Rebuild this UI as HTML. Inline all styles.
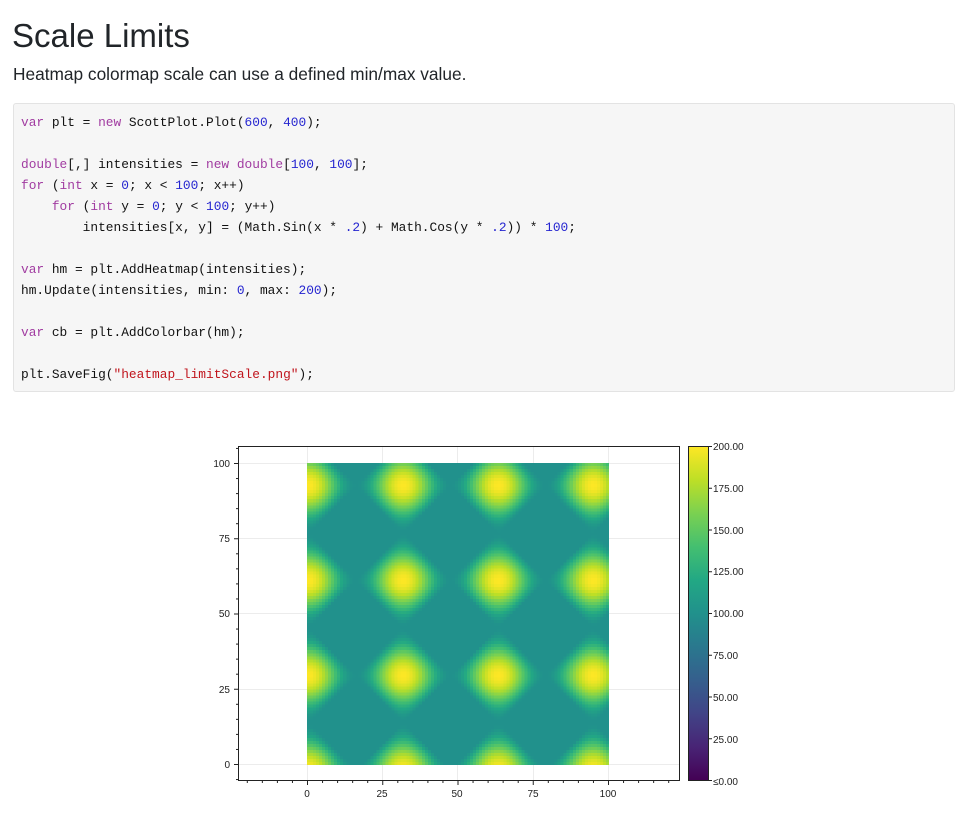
<!DOCTYPE html>
<html><head><meta charset="utf-8"><style>
body{margin:0;background:#fff;font-family:"Liberation Sans",sans-serif;color:#212529;width:968px;height:828px;overflow:hidden;position:relative}
h1{position:absolute;left:12px;top:15px;margin:0;font-size:33px;font-weight:400;line-height:42px}
p.sub{position:absolute;left:13px;top:64px;margin:0;font-size:17.3px}
pre{position:absolute;left:13px;top:103px;width:942px;height:289px;margin:0;background:#f6f6f6;border:1px solid #e3e3e3;border-radius:3px;font-family:"Liberation Mono",monospace;font-size:12.85px;line-height:21px;padding:8px 0 0 7px;box-sizing:border-box;color:#111}
.k{color:#a13ca1}.n{color:#2424d0}.s{color:#c0141c}
</style></head><body>
<h1>Scale Limits</h1>
<p class="sub">Heatmap colormap scale can use a defined min/max value.</p>
<pre><span class="k">var</span> plt = <span class="k">new</span> ScottPlot.Plot(<span class="n">600</span>, <span class="n">400</span>);

<span class="k">double</span>[,] intensities = <span class="k">new</span> <span class="k">double</span>[<span class="n">100</span>, <span class="n">100</span>];
<span class="k">for</span> (<span class="k">int</span> x = <span class="n">0</span>; x &lt; <span class="n">100</span>; x++)
    <span class="k">for</span> (<span class="k">int</span> y = <span class="n">0</span>; y &lt; <span class="n">100</span>; y++)
        intensities[x, y] = (Math.Sin(x * <span class="n">.2</span>) + Math.Cos(y * <span class="n">.2</span>)) * <span class="n">100</span>;

<span class="k">var</span> hm = plt.AddHeatmap(intensities);
hm.Update(intensities, min: <span class="n">0</span>, max: <span class="n">200</span>);

<span class="k">var</span> cb = plt.AddColorbar(hm);

plt.SaveFig(<span class="s">"heatmap_limitScale.png"</span>);</pre>

<svg style="position:absolute;left:0;top:0" width="968" height="828" font-family="Liberation Sans,sans-serif" font-size="10" fill="#222">
<defs><linearGradient id="vir" x1="0" y1="1" x2="0" y2="0">
<stop offset="0" stop-color="#440154"/><stop offset=".1" stop-color="#482475"/><stop offset=".2" stop-color="#414487"/><stop offset=".3" stop-color="#355f8d"/><stop offset=".4" stop-color="#2a788e"/><stop offset=".5" stop-color="#21918c"/><stop offset=".6" stop-color="#22a884"/><stop offset=".7" stop-color="#44bf70"/><stop offset=".8" stop-color="#7ad151"/><stop offset=".9" stop-color="#bddf26"/><stop offset="1" stop-color="#fde725"/></linearGradient></defs>
<g stroke="#ececec" stroke-width="1">
<line x1="307.5" y1="446" x2="307.5" y2="781"/><line x1="382.5" y1="446" x2="382.5" y2="781"/><line x1="457.5" y1="446" x2="457.5" y2="781"/><line x1="533.5" y1="446" x2="533.5" y2="781"/><line x1="608.5" y1="446" x2="608.5" y2="781"/>
<line x1="238" y1="463.5" x2="680" y2="463.5"/><line x1="238" y1="538.5" x2="680" y2="538.5"/><line x1="238" y1="613.5" x2="680" y2="613.5"/><line x1="238" y1="689.5" x2="680" y2="689.5"/><line x1="238" y1="764.5" x2="680" y2="764.5"/>
</g>
<foreignObject x="307" y="463" width="302" height="302"><canvas xmlns="http://www.w3.org/1999/xhtml" id="c" width="100" height="100" style="width:302px;height:302px;image-rendering:pixelated;display:block"></canvas></foreignObject>
<rect x="238.5" y="446.5" width="441" height="334" fill="none" stroke="#222"/>
<g stroke="#222" id="ticks"></g>
<g text-anchor="end"><text x="230" y="467">100</text><text x="230" y="542">75</text><text x="230" y="617">50</text><text x="230" y="693">25</text><text x="230" y="768">0</text></g>
<g text-anchor="middle"><text x="307" y="797">0</text><text x="382" y="797">25</text><text x="457" y="797">50</text><text x="533" y="797">75</text><text x="608" y="797">100</text></g>
<rect x="688.5" y="446.5" width="20" height="334" fill="url(#vir)" stroke="#222"/>
<g id="cbt" stroke="#222"></g>
<g><text x="713" y="450">200.00</text><text x="713" y="492">175.00</text><text x="713" y="534">150.00</text><text x="713" y="575">125.00</text><text x="713" y="617">100.00</text><text x="713" y="659">75.00</text><text x="713" y="701">50.00</text><text x="713" y="743">25.00</text><text x="713" y="785">≤0.00</text></g>
</svg>
<script>
var ns="http://www.w3.org/2000/svg",g=document.getElementById('ticks');
function L(p,x1,y1,x2,y2){var l=document.createElementNS(ns,'line');l.setAttribute('x1',x1);l.setAttribute('y1',y1);l.setAttribute('x2',x2);l.setAttribute('y2',y2);p.appendChild(l);}
for(var v=-5;v<=105;v+=5){var y=764.5-v*3.01;if(y<447||y>780)continue;L(g,v%25==0?234:236,y,238.5,y);}
for(var v=-20;v<=120;v+=5){var x=307.5+v*3.01;if(x<239||x>679)continue;L(g,x,780.5,x,v%25==0?785:783);}
var cb=document.getElementById('cbt');for(var i=0;i<=8;i++){var y=446.5+i*41.75;L(cb,708.5,y,712,y);}
var st=[[.5,[33,145,140]],[.6,[34,168,132]],[.7,[68,191,112]],[.8,[122,209,81]],[.9,[189,223,38]],[1,[253,231,37]]];
function col(t){if(t<=.5)return st[0][1];for(var i=1;i<st.length;i++){if(t<=st[i][0]){var a=st[i-1],b=st[i],f=(t-a[0])/(b[0]-a[0]);return a[1].map(function(c,k){return Math.round(c+(b[1][k]-c)*f)});}}return st[5][1];}
var c=document.getElementById('c').getContext('2d'),im=c.createImageData(100,100);
for(var r=0;r<100;r++)for(var q=0;q<100;q++){var dx=q,dy=99-r;var v=Math.cos(dx*.2)+Math.cos((dy-92)*.2);var t=0.5+Math.max(v,0)/4;var cc=col(t);var o=(r*100+q)*4;im.data[o]=cc[0];im.data[o+1]=cc[1];im.data[o+2]=cc[2];im.data[o+3]=255;}
c.putImageData(im,0,0);
</script>
</body></html>
